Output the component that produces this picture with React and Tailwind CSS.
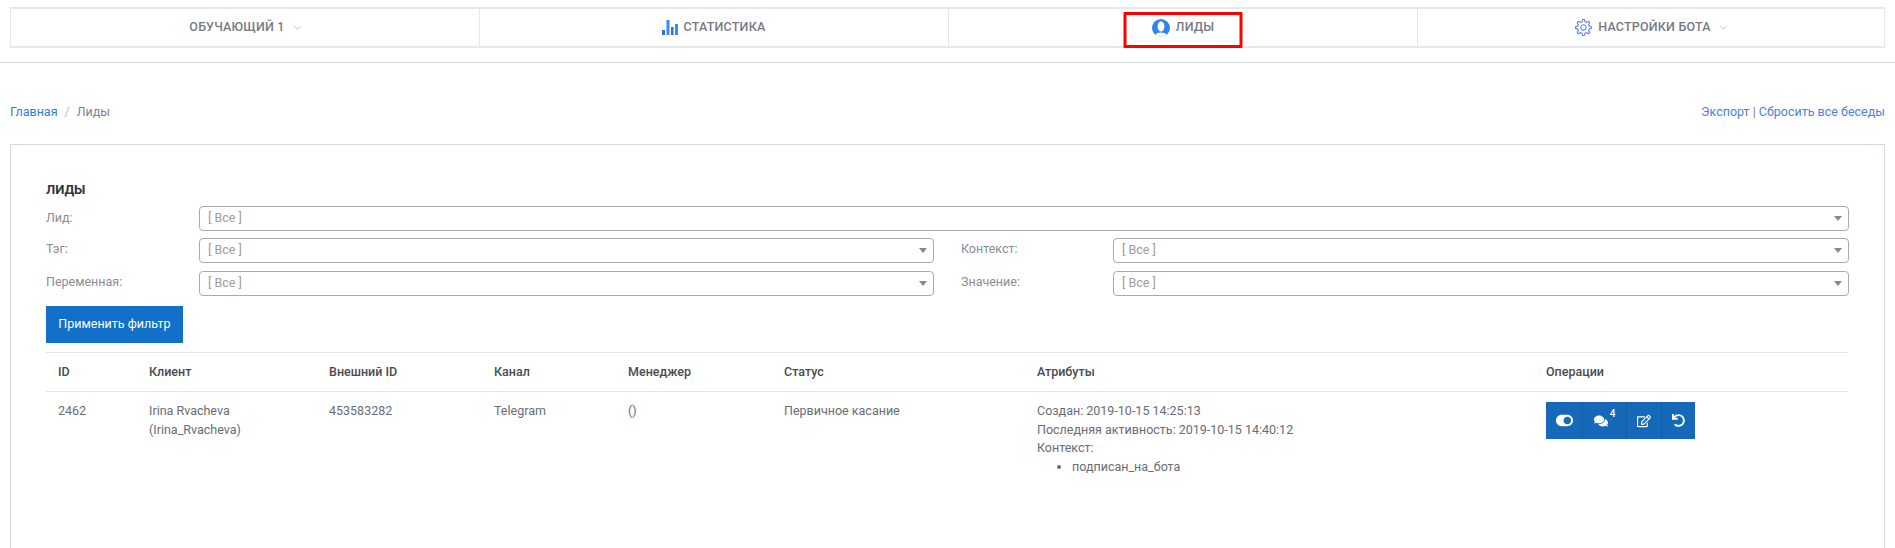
import { FaToggleOn, FaComments, FaRegEdit, FaUndo } from 'react-icons/fa'
import { SlSettings, SlArrowDown } from 'react-icons/sl'

function BarsIcon() {
  return (
    <svg width="16" height="15" viewBox="0 0 16 15" className="mr-[6px] -ml-[1px]">
      <rect x="0" y="10" width="3" height="5" fill="#2f6fd8" />
      <rect x="4.5" y="0" width="3" height="15" fill="#3b8bf0" />
      <rect x="9" y="7" width="2.5" height="8" fill="#2f6fd8" />
      <rect x="13" y="4" width="3" height="11" fill="#3b8bf0" />
    </svg>
  )
}

function PersonIcon() {
  return (
    <svg width="18" height="18" viewBox="0 0 18 18" className="mr-[6px]">
      <circle cx="9" cy="9" r="9" fill="#2f86e8" />
      <ellipse cx="9" cy="7.4" rx="3.4" ry="5.2" fill="#fff" />
      <path d="M3.2 16 C4.4 14.4 6.4 13.6 9 13.6 C11.6 13.6 13.6 14.4 14.8 16 C13 17.4 11 17.8 9 17.8 C7 17.8 5 17.4 3.2 16 Z" fill="#fff" />
    </svg>
  )
}

function Chevron() {
  return <SlArrowDown className="ml-[9px] text-[7px] text-[#9a9ca5]" />
}

function Tab({ children, last }) {
  return (
    <div className={`relative flex items-center justify-center text-[12.5px] font-medium text-[#777a85] tracking-[0.2px] ${last ? 'flex-1' : 'w-[469px] border-r border-[#e6e7ea]'}`}>
      {children}
    </div>
  )
}

function Select({ className }) {
  return (
    <div className={`h-[25px] border border-[#aaaaaa] rounded-[4px] flex items-center justify-between pl-2 pr-[6px] text-[12.5px] text-[#a09c9c] ${className}`}>
      <span>[ Все ]</span>
      <span className="w-0 h-0 border-x-[4px] border-x-transparent border-t-[5px] border-t-[#888888]" />
    </div>
  )
}

function FilterRow({ label, value, className }) {
  return (
    <div className={`flex items-center h-[25px] ${className}`}>
      <div className="w-[153px] -mt-[2px] text-[#8a8c95]">{label}</div>
      <Select className="w-[735px]" />
      <div className="w-[179px] pl-[27px] -mt-[2px] text-[#8a8c95]">{value}</div>
      <Select className="flex-1" />
    </div>
  )
}

function OpButton({ children, className }) {
  return (
    <div className={`h-full flex items-center justify-center text-white border-r border-[#125ea8] last:border-r-0 ${className}`}>
      {children}
    </div>
  )
}

export default function App() {
  return (
    <div className="h-[548px] overflow-hidden bg-white font-['Roboto',sans-serif] text-[12.5px] text-[#6a6c75]">
      {/* Top menu */}
      <div className="border-b border-[#d3d9e0] pt-[7px] pb-[14px] px-[10px] h-[63px]">
        <div className="flex h-[41px] border-y-2 border-x border-[#e7e8ea]">
          <Tab>
            ОБУЧАЮЩИЙ 1
            <Chevron />
          </Tab>
          <Tab>
            <BarsIcon />
            СТАТИСТИКА
          </Tab>
          <Tab>
            <PersonIcon />
            ЛИДЫ
            <div className="absolute left-1/2 -translate-x-1/2 top-[3px] w-[119px] h-[36px] border-[3px] border-[#fe0000] rounded-[1px]" />
          </Tab>
          <Tab last>
            <SlSettings className="mr-[6px] text-[17px] text-[#5b7fe0]" />
            НАСТРОЙКИ БОТА
            <Chevron />
          </Tab>
        </div>
      </div>

      {/* Breadcrumbs */}
      <div className="flex items-center justify-between px-[10px] h-[81px] pt-[17px]">
        <div className="flex items-center">
          <span className="text-[#2b7fe0]">Главная</span>
          <span className="mx-[7px] text-[#b5b7bd]">/</span>
          <span className="text-[#7f818a]">Лиды</span>
        </div>
        <div>
          <span className="text-[#4a7fe6]">Экспорт</span>
          <span className="text-[#7f818a]"> | </span>
          <span className="text-[#4a7fe6]">Сбросить все беседы</span>
        </div>
      </div>

      {/* Card */}
      <div className="mx-[10px] h-[500px] border border-[#d3d9e0] pt-[36px] px-[35px]">
        <h2 className="text-[13px] font-bold text-[#33343a] leading-[18px] mb-[7px]">ЛИДЫ</h2>

        <div className="flex items-center h-[25px] mb-[7px]">
          <div className="w-[153px] -mt-[1px] text-[#8a8c95]">Лид:</div>
          <Select className="flex-1" />
        </div>
        <FilterRow label="Тэг:" value="Контекст:" className="mb-[8px]" />
        <FilterRow label="Переменная:" value="Значение:" />

        <button className="block mt-[10px] w-[137px] h-[37px] bg-[#1270c8] text-white">
          Применить фильтр
        </button>

        <table className="w-[1802px] mt-[9px] table-fixed border-collapse">
          <colgroup>
            <col className="w-[91px]" />
            <col className="w-[180px]" />
            <col className="w-[165px]" />
            <col className="w-[134px]" />
            <col className="w-[156px]" />
            <col className="w-[253px]" />
            <col className="w-[509px]" />
            <col />
          </colgroup>
          <thead>
            <tr className="border-y border-[#e2e3e6] h-[39px] text-left">
              {['ID', 'Клиент', 'Внешний ID', 'Канал', 'Менеджер', 'Статус', 'Атрибуты', 'Операции'].map((h) => (
                <th key={h} className="pl-[12px] font-medium text-[#4a4b52]">{h}</th>
              ))}
            </tr>
          </thead>
          <tbody>
            <tr className="align-top leading-[18.5px]">
              <td className="pl-[12px] pt-[10px]">2462</td>
              <td className="pl-[12px] pt-[10px]">Irina Rvacheva<br />(Irina_Rvacheva)</td>
              <td className="pl-[12px] pt-[10px]">453583282</td>
              <td className="pl-[12px] pt-[10px]">Telegram</td>
              <td className="pl-[12px] pt-[10px]">()</td>
              <td className="pl-[12px] pt-[10px]">Первичное касание</td>
              <td className="pl-[12px] pt-[10px]">
                Создан: 2019-10-15 14:25:13<br />
                Последняя активность: 2019-10-15 14:40:12<br />
                Контекст:
                <ul className="list-disc pl-[35px]">
                  <li>подписан_на_бота</li>
                </ul>
              </td>
              <td className="pl-[12px] pt-[10px]">
                <div className="flex w-[149px] h-[37px] bg-[#1569b8]">
                  <OpButton className="w-[37px]"><FaToggleOn className="text-[17px]" /></OpButton>
                  <OpButton className="w-[44px]">
                    <FaComments className="text-[14px]" />
                    <sup className="text-[10px] font-medium ml-[2px] -mt-[4px]">4</sup>
                  </OpButton>
                  <OpButton className="w-[35px]"><FaRegEdit className="text-[14px]" /></OpButton>
                  <OpButton className="flex-1"><FaUndo className="text-[13px]" /></OpButton>
                </div>
              </td>
            </tr>
          </tbody>
        </table>
      </div>
    </div>
  )
}
